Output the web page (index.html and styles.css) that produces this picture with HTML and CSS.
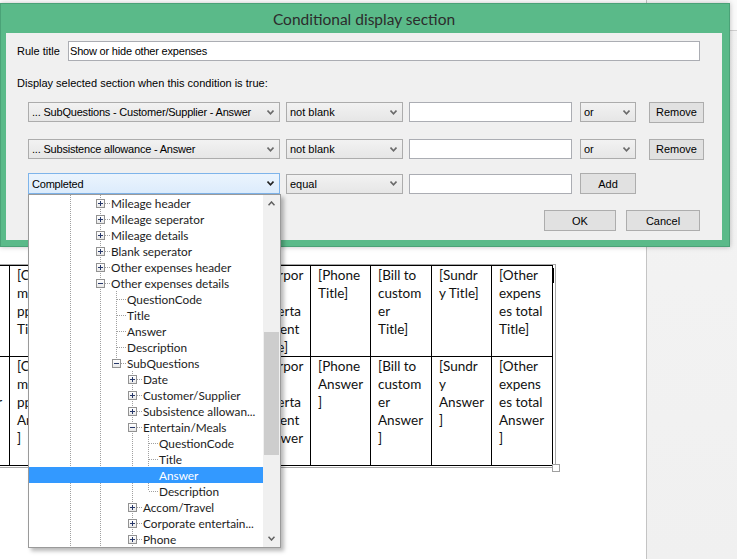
FILE: index.html
```html
<!DOCTYPE html>
<html lang="en">
<head>
<meta charset="UTF-8">
<title>Conditional display section</title>
<link rel="stylesheet" href="styles.css">
</head>
<body>

<div class="page">
  <div class="doc">
    <div class="table-frame">
      <table class="grid">
        <colgroup>
          <col class="c60"><col class="c60"><col class="c60"><col class="c61"><col class="c60">
          <col class="c60"><col class="c60"><col class="c61"><col class="c60"><col class="c61">
        </colgroup>
        <tr class="row-title">
          <td>[Mile<br>age<br>Title]</td>
          <td>[Com<br>mute<br>ppm<br>Title]</td>
          <td>[Date<br>Title]</td>
          <td>[Custo<br>mer<br>Title]</td>
          <td>[Subsi<br>stence<br>Title]</td>
          <td>[Corpor<br>ate<br>enterta<br>inment<br>Title]</td>
          <td>[Phone<br>Title]</td>
          <td>[Bill to<br>custom<br>er<br>Title]</td>
          <td>[Sundr<br>y Title]</td>
          <td>[Other<br>expens<br>es total<br>Title]</td>
        </tr>
        <tr class="row-answer">
          <td>[Mile<br>age<br>Answer<br>]</td>
          <td>[Com<br>mute<br>ppm<br>Answer<br>]</td>
          <td>[Date<br>Answer<br>]</td>
          <td>[Custo<br>mer<br>Answer<br>]</td>
          <td>[Subsi<br>stence<br>Answer<br>]</td>
          <td>[Corpor<br>ate<br>enterta<br>inment<br>Answer<br>]</td>
          <td>[Phone<br>Answer<br>]</td>
          <td>[Bill to<br>custom<br>er<br>Answer<br>]</td>
          <td>[Sundr<br>y<br>Answer<br>]</td>
          <td>[Other<br>expens<br>es total<br>Answer<br>]</td>
        </tr>
      </table>
      <span class="caret"></span>
      <span class="handle"></span>
    </div>
  </div>
  <div class="side-panel">
    <div class="side-head"></div>
  </div>
</div>

<div class="dialog">
  <div class="dialog-title">Conditional display section</div>
  <div class="dialog-body">
    <div class="rule-row">
      <label for="ruleTitle">Rule title</label>
      <input type="text" id="ruleTitle" class="text-box rule-input" value="Show or hide other expenses">
    </div>
    <p class="hint">Display selected section when this condition is true:</p>

    <div class="cond-row">
      <div class="combo field"><span>... SubQuestions - Customer/Supplier - Answer</span>
        <svg class="chev" width="7" height="5" viewBox="0 0 7 5"><path d="M0.5 0.5 L3.5 3.8 L6.5 0.5"/></svg>
      </div>
      <div class="combo op"><span>not blank</span>
        <svg class="chev" width="7" height="5" viewBox="0 0 7 5"><path d="M0.5 0.5 L3.5 3.8 L6.5 0.5"/></svg>
      </div>
      <input type="text" class="text-box value">
      <div class="combo join"><span>or</span>
        <svg class="chev" width="7" height="5" viewBox="0 0 7 5"><path d="M0.5 0.5 L3.5 3.8 L6.5 0.5"/></svg>
      </div>
      <button class="btn remove">Remove</button>
    </div>

    <div class="cond-row second">
      <div class="combo field"><span>... Subsistence allowance - Answer</span>
        <svg class="chev" width="7" height="5" viewBox="0 0 7 5"><path d="M0.5 0.5 L3.5 3.8 L6.5 0.5"/></svg>
      </div>
      <div class="combo op"><span>not blank</span>
        <svg class="chev" width="7" height="5" viewBox="0 0 7 5"><path d="M0.5 0.5 L3.5 3.8 L6.5 0.5"/></svg>
      </div>
      <input type="text" class="text-box value">
      <div class="combo join"><span>or</span>
        <svg class="chev" width="7" height="5" viewBox="0 0 7 5"><path d="M0.5 0.5 L3.5 3.8 L6.5 0.5"/></svg>
      </div>
      <button class="btn remove">Remove</button>
    </div>

    <div class="cond-row third">
      <div class="combo field open"><span>Completed</span>
        <svg class="chev" width="7" height="5" viewBox="0 0 7 5"><path d="M0.5 0.5 L3.5 3.8 L6.5 0.5"/></svg>

        <div class="tree-popup">
          <div class="tree-area">
            <svg class="tree-lines" width="233" height="352" viewBox="0 0 233 352">
              <g stroke="#a0a0a0" stroke-width="1" stroke-dasharray="1 1" fill="none">
                <line x1="41.5" y1="0" x2="41.5" y2="352"/>
                <line x1="71.5" y1="0" x2="71.5" y2="352"/>
                <line x1="87.5" y1="96" x2="87.5" y2="168"/>
                <line x1="103.5" y1="176" x2="103.5" y2="352"/>
                <line x1="119.5" y1="240" x2="119.5" y2="296"/>
                <line x1="76" y1="8.5" x2="81" y2="8.5"/>
                <line x1="76" y1="24.5" x2="81" y2="24.5"/>
                <line x1="76" y1="40.5" x2="81" y2="40.5"/>
                <line x1="76" y1="56.5" x2="81" y2="56.5"/>
                <line x1="76" y1="72.5" x2="81" y2="72.5"/>
                <line x1="76" y1="88.5" x2="81" y2="88.5"/>
                <line x1="88" y1="104.5" x2="97" y2="104.5"/>
                <line x1="88" y1="120.5" x2="97" y2="120.5"/>
                <line x1="88" y1="136.5" x2="97" y2="136.5"/>
                <line x1="88" y1="152.5" x2="97" y2="152.5"/>
                <line x1="92" y1="168.5" x2="97" y2="168.5"/>
                <line x1="108" y1="184.5" x2="113" y2="184.5"/>
                <line x1="108" y1="200.5" x2="113" y2="200.5"/>
                <line x1="108" y1="216.5" x2="113" y2="216.5"/>
                <line x1="108" y1="232.5" x2="113" y2="232.5"/>
                <line x1="120" y1="248.5" x2="129" y2="248.5"/>
                <line x1="120" y1="264.5" x2="129" y2="264.5"/>
                <line x1="120" y1="296.5" x2="129" y2="296.5"/>
                <line x1="108" y1="312.5" x2="113" y2="312.5"/>
                <line x1="108" y1="328.5" x2="113" y2="328.5"/>
                <line x1="108" y1="344.5" x2="113" y2="344.5"/>
              </g>
            </svg>
            <div class="node lv-a"><span class="exp plus"></span>Mileage header</div>
            <div class="node lv-a"><span class="exp plus"></span>Mileage seperator</div>
            <div class="node lv-a"><span class="exp plus"></span>Mileage details</div>
            <div class="node lv-a"><span class="exp plus"></span>Blank seperator</div>
            <div class="node lv-a"><span class="exp plus"></span>Other expenses header</div>
            <div class="node lv-a"><span class="exp minus"></span>Other expenses details</div>
            <div class="node leaf-b">QuestionCode</div>
            <div class="node leaf-b">Title</div>
            <div class="node leaf-b">Answer</div>
            <div class="node leaf-b">Description</div>
            <div class="node lv-b"><span class="exp minus"></span>SubQuestions</div>
            <div class="node lv-c"><span class="exp plus"></span>Date</div>
            <div class="node lv-c"><span class="exp plus"></span>Customer/Supplier</div>
            <div class="node lv-c"><span class="exp plus"></span>Subsistence allowan...</div>
            <div class="node lv-c"><span class="exp minus"></span>Entertain/Meals</div>
            <div class="node leaf-d">QuestionCode</div>
            <div class="node leaf-d">Title</div>
            <div class="node leaf-d selected">Answer</div>
            <div class="node leaf-d">Description</div>
            <div class="node lv-c"><span class="exp plus"></span>Accom/Travel</div>
            <div class="node lv-c"><span class="exp plus"></span>Corporate entertain...</div>
            <div class="node lv-c"><span class="exp plus"></span>Phone</div>
          </div>
          <div class="scrollbar">
            <span class="arrow">
              <svg width="7" height="5" viewBox="0 0 7 5"><path d="M0.5 4.3 L3.5 1 L6.5 4.3"/></svg>
            </span>
            <div class="track"><span class="thumb"></span></div>
            <span class="arrow">
              <svg width="7" height="5" viewBox="0 0 7 5"><path d="M0.5 0.7 L3.5 4 L6.5 0.7"/></svg>
            </span>
          </div>
        </div>
      </div>
      <div class="combo op"><span>equal</span>
        <svg class="chev" width="7" height="5" viewBox="0 0 7 5"><path d="M0.5 0.5 L3.5 3.8 L6.5 0.5"/></svg>
      </div>
      <input type="text" class="text-box value">
      <button class="btn add">Add</button>
    </div>

    <div class="actions">
      <button class="btn ok">OK</button>
      <button class="btn cancel">Cancel</button>
    </div>
  </div>
</div>

</body>
</html>
```

FILE: styles.css
```css
body {
  margin: 0;
  font-family: "Liberation Sans", Arial, sans-serif;
  font-size: 11px;
  color: #000;
  background-color: #fff;
}

.page {
  display: flex;
  width: 737px;
  height: 559px;
  overflow: hidden;
}

/* document behind the dialog */
.doc {
  width: 646px;
  padding-top: 264px;
  overflow: hidden;
}

.table-frame {
  position: relative;
  display: inline-block;
  margin-left: -51px;
  padding: 0 2px 1px 0;
  border-top: 1px solid #a8a8a8;
  border-right: 1px solid #a8a8a8;
  border-bottom: 1px solid #a8a8a8;
}

.grid {
  border-collapse: collapse;
  table-layout: fixed;
  width: 603px;
  font-family: Lato, "Open Sans", sans-serif;
  font-size: 13.5px;
  line-height: 18px;
  color: #111;
}

.grid .c60 { width: 60px; }
.grid .c61 { width: 61px; }

.grid td {
  border: 1px solid #000;
  vertical-align: top;
  padding: 0 2px 0 7px;
  white-space: nowrap;
  overflow: hidden;
}

.row-title { height: 90px; }
.row-answer { height: 108px; }

.caret {
  position: absolute;
  right: 1px;
  top: 3px;
  width: 1px;
  height: 15px;
  background-color: #000;
}

.handle {
  position: absolute;
  right: -5px;
  bottom: -5px;
  width: 6px;
  height: 6px;
  border: 1px solid #a0a0a0;
  background-color: #fff;
}

.side-panel {
  flex: 1;
  border-left: 1px solid #c4c4c4;
  background: linear-gradient(#f4f4f4, #f0f0f0);
}

.side-head {
  height: 30px;
  border-bottom: 1px solid #d0d0d0;
  background-color: #fafafa;
}

/* dialog */
.dialog {
  position: absolute;
  left: 0;
  top: 3px;
  width: 730px;
  height: 244px;
  box-sizing: border-box;
  display: flex;
  flex-direction: column;
  padding: 0 7px 6px 5px;
  background-color: #5aba89;
  border: 1px solid #4aa277;
  box-shadow: 0 0 5px rgba(0, 0, 0, 0.25);
}

.dialog-title {
  height: 29px;
  line-height: 31px;
  text-align: center;
  font-family: Lato, "Open Sans", sans-serif;
  font-size: 15.5px;
  color: #2c2c2c;
}

.dialog-body {
  flex: 1;
  position: relative;
  padding-left: 11px;
  background-color: #f0f0f0;
}

.rule-row {
  display: flex;
  align-items: center;
  margin-top: 8px;
}

.rule-row label {
  width: 51px;
}

.text-box {
  box-sizing: border-box;
  height: 20px;
  margin: 0;
  padding: 0 2px;
  border: 1px solid #abadb3;
  background-color: #fff;
  font-family: inherit;
  font-size: 11px;
  color: #000;
  outline: none;
}

.rule-input {
  width: 632px;
  padding-left: 1px;
  letter-spacing: -0.2px;
}

.hint {
  margin: 16px 0 0;
  line-height: 13px;
}

.cond-row {
  display: flex;
  align-items: center;
  margin-top: 12px;
  padding-left: 11px;
  height: 20px;
}

.cond-row.second { margin-top: 17px; }
.cond-row.third { margin-top: 14px; height: 21px; }

.combo {
  position: relative;
  flex-shrink: 0;
  box-sizing: border-box;
  height: 20px;
  display: flex;
  align-items: center;
  justify-content: space-between;
  padding: 0 5px 0 3px;
  border: 1px solid #acacac;
  background: linear-gradient(#f2f2f2, #e6e6e6);
  white-space: nowrap;
}

.combo .chev path {
  fill: none;
  stroke: #6a6a6a;
  stroke-width: 1.6;
}

.combo.field { width: 252px; margin-right: 6px; }
.combo.field span { letter-spacing: -0.2px; }
.combo.op { width: 117px; margin-right: 6px; }
.combo.join { width: 56px; margin-left: 8px; }

.cond-row .value { width: 163px; flex-shrink: 0; }

.combo.open {
  height: 21px;
  border-color: #7eb4ea;
  background: linear-gradient(#ebf4fd, #dcecfc);
}

.combo.open .chev path { stroke: #222; }

.btn {
  flex-shrink: 0;
  box-sizing: border-box;
  height: 21px;
  margin: 0;
  padding: 0;
  border: 1px solid #adadad;
  background-color: #e1e1e1;
  font-family: inherit;
  font-size: 11px;
  color: #000;
}

.btn.remove { width: 55px; margin-left: 13px; }
.btn.add { width: 56px; margin-left: 8px; }

.actions {
  display: flex;
  justify-content: flex-end;
  gap: 10px;
  margin: 16px 22px 0 0;
}

.btn.ok { width: 72px; }
.btn.cancel { width: 74px; }

/* dropdown tree */
.tree-popup {
  position: absolute;
  left: -1px;
  top: calc(100% + 1px);
  z-index: 2;
  width: 253px;
  height: 354px;
  box-sizing: border-box;
  display: flex;
  border: 1px solid #9a9a9a;
  background-color: #fff;
  box-shadow: 3px 3px 4px rgba(0, 0, 0, 0.28);
  font-family: Lato, "Open Sans", sans-serif;
  font-size: 11.8px;
  color: #1c1c1c;
}

.tree-area {
  position: relative;
  width: 234px;
  overflow: hidden;
}

.tree-lines {
  position: absolute;
  left: 0;
  top: 0;
}

.node {
  position: relative;
  display: flex;
  align-items: center;
  height: 16px;
}

.lv-a { padding-left: 67px; }
.lv-b { padding-left: 83px; }
.lv-c { padding-left: 99px; }
.leaf-b { padding-left: 98px; }
.leaf-d { padding-left: 130px; }

.node.selected {
  background-color: #3399ff;
  color: #fff;
}

.exp {
  position: relative;
  box-sizing: border-box;
  width: 9px;
  height: 9px;
  margin-right: 6px;
  border: 1px solid #929292;
  background: linear-gradient(#ffffff, #e8e8e8);
}

.exp::before {
  content: "";
  position: absolute;
  left: 1px;
  top: 3px;
  width: 5px;
  height: 1px;
  background-color: #27386a;
}

.exp.plus::after {
  content: "";
  position: absolute;
  left: 3px;
  top: 1px;
  width: 1px;
  height: 5px;
  background-color: #27386a;
}

.scrollbar {
  width: 17px;
  display: flex;
  flex-direction: column;
  background-color: #f0f0f0;
}

.scrollbar .arrow {
  height: 17px;
  display: flex;
  align-items: center;
  justify-content: center;
}

.scrollbar .arrow path {
  fill: none;
  stroke: #606060;
  stroke-width: 1.5;
}

.track {
  flex: 1;
  padding-top: 120px;
}

.thumb {
  display: block;
  width: 15px;
  height: 123px;
  margin-left: 1px;
  background-color: #cdcdcd;
}
```
